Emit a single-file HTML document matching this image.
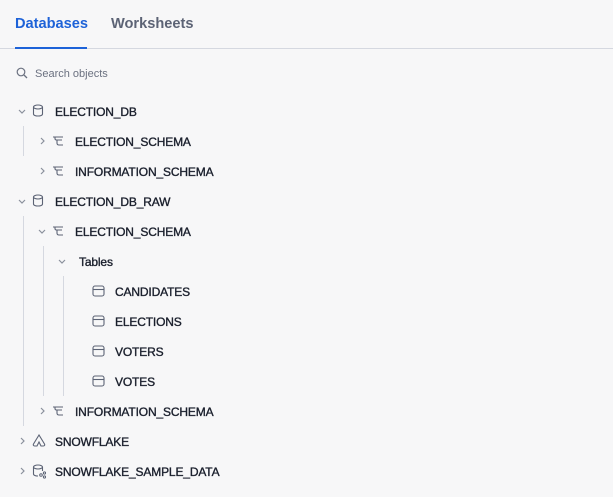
<!DOCTYPE html>
<html><head><style>
body{margin:0;width:613px;height:497px;background:#f7f7f8;font-family:"Liberation Sans",sans-serif;position:relative;overflow:hidden}
.tab{position:absolute;top:16px;font-size:14.6px;font-weight:bold}
.r{position:absolute;font-size:12px;color:#1a1f2c;letter-spacing:-0.15px;line-height:14px;-webkit-text-stroke:0.35px #1a1f2c}
.vl{position:absolute;width:1px;background:#d5d8e0}
svg{position:absolute}
</style></head><body>
<div class="tab" style="left:15px;color:#1d62d8">Databases</div>
<div class="tab" style="left:111px;color:#5c6375">Worksheets</div>
<div style="position:absolute;left:0;top:48px;width:613px;height:1px;background:#d5d8e0"></div>
<div style="position:absolute;left:15px;top:47px;width:72px;height:2px;background:#1d62d8"></div>
<svg style="left:16px;top:67px" width="12" height="12" viewBox="0 0 12 12"><circle cx="5" cy="5" r="3.8" fill="none" stroke="#6b7180" stroke-width="1.2"/><path d="M8 8l3 3" stroke="#6b7180" stroke-width="1.3"/></svg>
<div class="r" style="left:35px;top:67px;color:#6b7180;font-size:11px;-webkit-text-stroke:0;letter-spacing:0">Search objects</div>

<div class="vl" style="left:23px;top:126px;height:30px"></div>
<div class="vl" style="left:23px;top:216px;height:210px"></div>
<div class="vl" style="left:43px;top:246px;height:150px"></div>
<div class="vl" style="left:63px;top:276px;height:120px"></div>

<svg width="0" height="0"><defs>
<g id="dn"><path d="M1 3l3 3 3-3" fill="none" stroke="#8a909c" stroke-width="1.2"/></g>
<g id="rt"><path d="M3 1l3 3-3 3" fill="none" stroke="#8a909c" stroke-width="1.2"/></g>
<g id="db"><ellipse cx="6" cy="3" rx="4.5" ry="2" fill="none" stroke="#5c6375" stroke-width="1.1"/><path d="M1.5 3v7c0 1.2 2 2 4.5 2s4.5-.8 4.5-2V3" fill="none" stroke="#5c6375" stroke-width="1.1"/></g>
<g id="sc"><path d="M1 2h10M3 2v1.5c0 1 .5 1.5 1.5 1.5H10M5 5v3c0 1.5.5 2 2 2h4" fill="none" stroke="#5c6375" stroke-width="1.1"/></g>
<g id="tb"><rect x="1" y="1" width="11" height="10" rx="2" fill="none" stroke="#5c6375" stroke-width="1.1"/><path d="M1 4.5h11" stroke="#5c6375" stroke-width="1.1"/></g>
</defs></svg>

<svg style="left:18px;top:107px" width="10" height="10"><use href="#dn"/></svg>
<svg style="left:32px;top:104px" width="13" height="14"><use href="#db"/></svg>
<div class="r" style="left:55px;top:105px">ELECTION_DB</div>

<svg style="left:38px;top:137px" width="10" height="10"><use href="#rt"/></svg>
<svg style="left:52px;top:135px" width="13" height="13"><use href="#sc"/></svg>
<div class="r" style="left:75px;top:135px">ELECTION_SCHEMA</div>

<svg style="left:38px;top:167px" width="10" height="10"><use href="#rt"/></svg>
<svg style="left:52px;top:165px" width="13" height="13"><use href="#sc"/></svg>
<div class="r" style="left:75px;top:165px">INFORMATION_SCHEMA</div>

<svg style="left:18px;top:197px" width="10" height="10"><use href="#dn"/></svg>
<svg style="left:32px;top:194px" width="13" height="14"><use href="#db"/></svg>
<div class="r" style="left:55px;top:195px">ELECTION_DB_RAW</div>

<svg style="left:38px;top:227px" width="10" height="10"><use href="#dn"/></svg>
<svg style="left:52px;top:225px" width="13" height="13"><use href="#sc"/></svg>
<div class="r" style="left:75px;top:225px">ELECTION_SCHEMA</div>

<svg style="left:58px;top:257px" width="10" height="10"><use href="#dn"/></svg>
<div class="r" style="left:79px;top:255px">Tables</div>

<svg style="left:92px;top:285px" width="13" height="12"><use href="#tb"/></svg>
<div class="r" style="left:115px;top:285px">CANDIDATES</div>
<svg style="left:92px;top:315px" width="13" height="12"><use href="#tb"/></svg>
<div class="r" style="left:115px;top:315px">ELECTIONS</div>
<svg style="left:92px;top:345px" width="13" height="12"><use href="#tb"/></svg>
<div class="r" style="left:115px;top:345px">VOTERS</div>
<svg style="left:92px;top:375px" width="13" height="12"><use href="#tb"/></svg>
<div class="r" style="left:115px;top:375px">VOTES</div>

<svg style="left:38px;top:407px" width="10" height="10"><use href="#rt"/></svg>
<svg style="left:52px;top:405px" width="13" height="13"><use href="#sc"/></svg>
<div class="r" style="left:75px;top:405px">INFORMATION_SCHEMA</div>

<svg style="left:18px;top:437px" width="10" height="10"><use href="#rt"/></svg>
<svg style="left:32px;top:434px" width="14" height="13" viewBox="0 0 14 13"><path d="M7 1L1.5 10c-.5 1 0 2 1.2 2H5l2-4 2 4h2.3c1.2 0 1.7-1 1.2-2z" fill="none" stroke="#5c6375" stroke-width="1.1"/></svg>
<div class="r" style="left:55px;top:435px">SNOWFLAKE</div>

<svg style="left:18px;top:467px" width="10" height="10"><use href="#rt"/></svg>
<svg style="left:32px;top:464px" width="14" height="15" viewBox="0 0 14 15"><ellipse cx="6" cy="3" rx="4.5" ry="2" fill="none" stroke="#5c6375" stroke-width="1.1"/><path d="M1.5 3v7c0 1.2 2 2 4.5 2M10.5 3v4" fill="none" stroke="#5c6375" stroke-width="1.1"/><circle cx="9" cy="11" r="1.3" fill="none" stroke="#5c6375"/><circle cx="12.5" cy="9" r="1.1" fill="none" stroke="#5c6375"/><circle cx="12.5" cy="13" r="1.1" fill="none" stroke="#5c6375"/></svg>
<div class="r" style="left:55px;top:465px">SNOWFLAKE_SAMPLE_DATA</div>
</body></html>
